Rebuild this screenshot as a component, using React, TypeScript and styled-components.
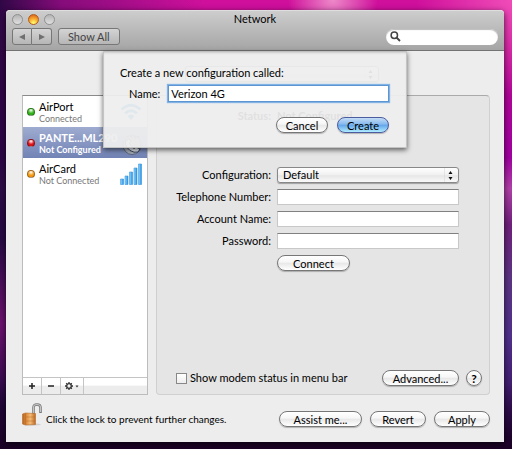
import React from "react";
import styled, { createGlobalStyle, css } from "styled-components";

const Global = createGlobalStyle`
  *, *::before, *::after { box-sizing: border-box; }
  body {
    margin: 0;
    font-family: Lato, "Open Sans", sans-serif;
    font-size: 11px;
    line-height: 14px;
    color: #000;
  }
  button, input, select { font: inherit; color: inherit; margin: 0; }
`;

const Desktop = styled.div`
  display: flex;
  min-height: 100vh;
  padding: 10px 8px 7px 6px;
  background:
    radial-gradient(circle at 65% 0, rgba(240, 150, 205, 0.9), transparent 8%),
    radial-gradient(circle at 100% 0, #f04cb8, transparent 14%),
    linear-gradient(180deg, transparent 85%, #1b0226 100%),
    radial-gradient(circle at 0 72%, rgba(140, 20, 130, 0.7), transparent 14%),
    linear-gradient(90deg, rgba(30, 6, 60, 0.9) 0, rgba(60, 8, 90, 0.5) 12%, transparent 40%),
    linear-gradient(180deg, #d0109c 0, #bb0894 12%, #a000a0 35%, #b040a8 42%, #70207c 50%, #5c3484 62%, #50308c 75%, #300650 100%);
`;

const Window = styled.main`
  position: relative;
  flex: 1;
  display: flex;
  flex-direction: column;
  min-width: 0;
  border-radius: 4px 4px 0 0;
  background: #ededed;
  box-shadow: 0 2px 6px rgba(0, 0, 0, 0.7);
`;

const Header = styled.header`
  display: flex;
  flex-direction: column;
  gap: 2px;
  height: 41px;
  padding-top: 1px;
  border-top: 1px solid #dedede;
  border-bottom: 1px solid #737373;
  border-radius: 4px 4px 0 0;
  background: linear-gradient(#cdcdcd, #a5a5a5);
`;

const TitleRow = styled.div`
  display: grid;
  grid-template-columns: 1fr auto 1fr;
  align-items: center;
  height: 14px;
  padding: 0 6px;
`;

const Title = styled.h1`
  margin: 0;
  font-size: 11px;
  font-weight: 400;
`;

const Lights = styled.div`
  display: flex;
  gap: 5px;
`;

const Light = styled.button<{ $lit?: boolean }>`
  width: 11px;
  height: 11px;
  padding: 0;
  border: 1px solid ${(p) => (p.$lit ? "#b35a1c" : "#8f8f8f")};
  border-radius: 50%;
  background: ${(p) =>
    p.$lit
      ? "radial-gradient(circle at 50% 90%, #fff36a 10%, #f8a72c 50%, #d9661c 90%)"
      : "linear-gradient(#b4b4b4, #e0e0e0)"};
`;

const Toolbar = styled.div`
  display: flex;
  align-items: center;
  gap: 6px;
  padding: 0 6px;
`;

const Segments = styled.div`
  display: flex;
`;

const ToolButton = styled.button`
  display: flex;
  align-items: center;
  justify-content: center;
  min-width: 60px;
  height: 17px;
  padding: 0 9px;
  border: 1px solid #777;
  border-radius: 3px;
  background: linear-gradient(#d4d4d4, #b6b6b6);
  color: #444;

  ${Segments} & {
    min-width: 20px;
    width: 20px;
    padding: 0;
  }
  ${Segments} &:first-child {
    border-radius: 3px 0 0 3px;
  }
  ${Segments} &:last-child {
    border-left: 0;
    border-radius: 0 3px 3px 0;
  }
`;

const Search = styled.label`
  display: flex;
  align-items: center;
  width: 112px;
  height: 16px;
  margin-left: auto;
  padding: 0 4px;
  border-radius: 8px;
  background: #fff;
  box-shadow: inset 0 1px 1px #bbb;

  input {
    flex: 1;
    min-width: 0;
    border: 0;
    outline: 0;
    background: transparent;
  }
`;

const Content = styled.div`
  position: relative;
  flex: 1;
  display: flex;
  flex-direction: column;
  padding: 15px 14px 13px 16px;
`;

const LocationRow = styled.div`
  display: flex;
  justify-content: center;
  height: 29px;
  padding-left: 52px;
`;

const Columns = styled.div`
  flex: 1;
  display: flex;
  gap: 8px;
`;

const Sidebar = styled.section`
  display: flex;
  flex-direction: column;
  width: 126px;
  border: 1px solid #bcbcbc;
  border-top-color: #8a8a8a;
  background: #fff;
`;

const Services = styled.ul`
  flex: 1;
  margin: 0;
  padding: 0;
  list-style: none;
`;

const Service = styled.li<{ $selected?: boolean }>`
  display: flex;
  align-items: center;
  gap: 4px;
  height: 31px;
  padding: 0 5px 0 4px;
  line-height: 13px;
  white-space: nowrap;
  ${(p) =>
    p.$selected &&
    css`
      background: linear-gradient(#9fabd0, #7183b5);
      color: #fff;
      font-weight: 700;
    `}
`;

const Dot = styled.span<{ $color: string }>`
  flex: none;
  width: 8px;
  height: 8px;
  border: 1px solid rgba(0, 0, 0, 0.35);
  border-radius: 50%;
  background: radial-gradient(circle at 50% 20%, #fff, ${(p) => p.$color} 55%);
`;

const ServiceText = styled.div`
  flex: 1;
  min-width: 0;
`;

const ServiceState = styled.div<{ $light?: boolean }>`
  font-size: 9px;
  line-height: 11px;
  color: ${(p) => (p.$light ? "#fff" : "#777")};
`;

const SidebarBar = styled.div`
  display: flex;
  height: 17px;
  border-top: 1px solid #c4c4c4;
  background: linear-gradient(#fff 45%, #ececec 50%);
`;

const BarButton = styled.button`
  display: flex;
  align-items: center;
  justify-content: center;
  width: 19px;
  padding: 0;
  border: 0;
  border-right: 1px solid #c4c4c4;
  background: transparent;

  &:last-child {
    width: 23px;
  }
`;

const Panel = styled.section`
  flex: 1;
  display: flex;
  flex-direction: column;
  min-width: 0;
  padding: 13px 7px 8px 19px;
  border: 1px solid #d0d0d0;
  border-top-color: #aaa;
  border-radius: 4px;
  background: #e5e5e5;
`;

const Form = styled.form`
  display: grid;
  grid-template-columns: 1fr 182px;
  grid-auto-rows: 16px;
  align-items: center;
  gap: 6px;
  padding-right: 23px;

  label {
    text-align: right;
    white-space: nowrap;
  }
`;

const Status = styled.div`
  display: grid;
  grid-template-columns: 1fr 182px;
  gap: 6px;
  height: 58px;
  padding-right: 23px;
  font-weight: 700;

  span:first-child {
    text-align: right;
  }
`;

const SelectBox = styled.div<{ $width?: string }>`
  display: grid;
  align-items: center;
  width: ${(p) => p.$width ?? "100%"};
  height: 16px;
  border: 1px solid #888;
  border-radius: 3px;
  background: linear-gradient(#fff, #f0f0f0 50%, #e6e6e6 55%, #fafafa);
  box-shadow: 0 1px 1px rgba(0, 0, 0, 0.3);

  > * {
    grid-area: 1 / 1;
  }
  svg {
    justify-self: end;
    pointer-events: none;
  }
  select {
    width: 100%;
    height: 14px;
    padding: 0 5px;
    border: 0;
    outline: 0;
    appearance: none;
    background: transparent;
    line-height: 14px;
  }
`;

const TextInput = styled.input`
  width: 100%;
  height: 16px;
  padding: 0 3px;
  border: 1px solid #c8c8c8;
  border-top-color: #808080;
  outline: 0;
  background: #fff;
`;

const PushButton = styled.button<{ $width: number; $primary?: boolean }>`
  width: ${(p) => p.$width}px;
  height: 16px;
  padding: 0;
  border: 1px solid ${(p) => (p.$primary ? "#4c5ca0" : "#777")};
  border-radius: 8px;
  background: ${(p) =>
    p.$primary
      ? "linear-gradient(#c4dcf6, #86b9ee 45%, #62a4ea 50%, #b0ecff)"
      : "linear-gradient(#fff, #f6f6f6 45%, #e7e7e7 50%, #fff)"};
  box-shadow: 0 1px 1px rgba(0, 0, 0, 0.25);
  line-height: 13px;
`;

const HelpButton = styled(PushButton)`
  font-size: 12px;
  font-weight: 700;
`;

const PanelFooter = styled.div`
  display: flex;
  align-items: center;
  gap: 7px;
  margin-top: auto;
`;

const CheckLabel = styled.label`
  display: flex;
  align-items: center;
  gap: 3px;
  margin-right: auto;

  input {
    width: 11px;
    height: 11px;
    appearance: none;
    border: 1px solid #888;
    background: linear-gradient(#fff, #eee);
  }
`;

const Footer = styled.footer`
  display: flex;
  align-items: center;
  gap: 8px;
  height: 34px;
  padding-top: 14px;
`;

const LockButton = styled.button`
  display: flex;
  align-items: center;
  gap: 4px;
  margin-right: auto;
  padding: 0;
  border: 0;
  background: transparent;
  font-size: 10px;

  svg {
    margin-top: -10px;
  }
`;

const Sheet = styled.section`
  position: absolute;
  top: 0;
  left: 50%;
  width: 304px;
  padding: 15px 17px 14px 16px;
  transform: translateX(-50%);
  border: 1px solid #c4c4c4;
  border-top: 0;
  background: rgba(238, 238, 238, 0.94);
  box-shadow: 0 2px 5px rgba(0, 0, 0, 0.6), inset 0 3px 3px -2px rgba(0, 0, 0, 0.3);
`;

const SheetTitle = styled.h2`
  margin: 0 0 5px;
  font-size: 11px;
  font-weight: 400;
  line-height: 14px;
`;

const NameRow = styled.label`
  display: flex;
  align-items: center;
  gap: 8px;
  padding-left: 9px;

  input {
    flex: 1;
    min-width: 0;
    height: 17px;
    padding: 0 2px;
    border: 1px solid #5b96d2;
    outline: 0;
    box-shadow: 0 0 0 1px #83b3e5, 0 0 1px 1px #83b3e5;
  }
`;

const SheetActions = styled.div`
  display: flex;
  justify-content: flex-end;
  gap: 9px;
  margin-top: 15px;
`;

const Steppers = () => (
  <svg width="14" height="14" viewBox="0 0 14 14" aria-hidden="true">
    <path d="M0 0v14" stroke="#d4d4d4" />
    <path d="M4.500 6 6.500 3 8.500 6ZM4.500 9 6.500 12 8.500 9Z" fill="#111" />
  </svg>
);

const Arrow = ({ flip }: { flip?: boolean }) => (
  <svg width="8" height="8" viewBox="0 0 8 8" aria-hidden="true">
    <path d={flip ? "M1 1 7 4 1 7Z" : "M7 1 1 4 7 7Z"} fill="#707070" />
  </svg>
);

const Magnifier = () => (
  <svg width="11" height="11" viewBox="0 0 11 11" aria-hidden="true">
    <circle cx="4.300" cy="4.300" r="3.200" fill="none" stroke="#444" strokeWidth="1.500" />
    <path d="m6.500 6.500 3.500 3.500" stroke="#444" strokeWidth="1.800" />
  </svg>
);

const Wifi = () => (
  <svg width="22" height="18" viewBox="0 0 22 18" aria-hidden="true">
    <g fill="none" stroke="#1c8cd8" strokeWidth="3">
      <path d="M1.500 6.500Q11-2 20.500 6.500" />
      <path d="M5 10.500Q11 5 17 10.500" />
    </g>
    <path d="M7.500 13Q11 10 14.500 13L11 17Z" fill="#1c8cd8" />
  </svg>
);

const Phone = () => (
  <svg width="22" height="24" viewBox="0 0 22 24" aria-hidden="true">
    <ellipse cx="12" cy="14" rx="9" ry="9.500" fill="#a6adb9" stroke="#57637c" />
    <path d="M5 11q1 6 5 8.500t8 1.500l2-3-4-2-2 1.500q-3-2-4.500-5l1.500-2-2-3Z" fill="#e6eaf2" stroke="#36425c" />
    <path d="M15 5v3m-4-3 1 2m7-2-2 2" stroke="#263655" />
  </svg>
);

const Bars = () => (
  <svg width="22" height="22" viewBox="0 0 22 22" aria-hidden="true">
    <defs>
      <linearGradient id="bars" x1="0" y1="0" x2="1" y2="0">
        <stop offset="0" stopColor="#9bdcfb" />
        <stop offset="1" stopColor="#1b8de6" />
      </linearGradient>
    </defs>
    <g fill="url(#bars)" stroke="#3c94da" strokeWidth="0.600">
      <path d="M.5 16h3v5.500h-3Z" />
      <path d="M5 13h3v8.500H5Z" />
      <path d="M9.500 9h3v12.500h-3Z" />
      <path d="M14 5h3v16.500h-3Z" />
      <path d="M18.500 1h3v20.500h-3Z" />
    </g>
  </svg>
);

const Gear = () => (
  <svg width="16" height="10" viewBox="0 0 16 10" aria-hidden="true">
    <circle cx="5" cy="5" r="2.300" fill="none" stroke="#333" strokeWidth="1.300" />
    <path
      d="M5 1v1.500M5 7.500V9M1 5h1.500M7.500 5H9M2.200 2.200l1 1M6.800 6.800l1 1M7.800 2.200l-1 1M3.200 6.800l-1 1"
      stroke="#333"
      strokeWidth="1.300"
    />
    <path d="M11.500 4.500h3l-1.500 2Z" fill="#333" />
  </svg>
);

const Sign = ({ plus }: { plus?: boolean }) => (
  <svg width="8" height="8" viewBox="0 0 8 8" aria-hidden="true">
    <path d={plus ? "M1 4h6M4 1v6" : "M1 4h6"} stroke="#222" strokeWidth="1.500" />
  </svg>
);

const Padlock = () => (
  <svg width="20" height="23" viewBox="0 0 20 23" aria-hidden="true">
    <defs>
      <linearGradient id="brass">
        <stop offset="0" stopColor="#b56422" />
        <stop offset="0.250" stopColor="#d98435" />
        <stop offset="0.600" stopColor="#f4bb76" />
        <stop offset="1" stopColor="#bd6822" />
      </linearGradient>
    </defs>
    <ellipse cx="10" cy="21.500" rx="9" ry="1.200" fill="#d0d0d0" />
    <path d="M11.500 11V4.500Q11.500 1.500 15 1.500T18.500 4.500V10" fill="none" stroke="#777" strokeWidth="2.600" />
    <path d="M11.500 10V4.500Q11.500 1.500 15 1.500T18.500 4.500V9" fill="none" stroke="#c4c4c4" strokeWidth="1.200" />
    <path d="m.5 11 3-1 10 .5v11l-10 .5-3-1Z" fill="url(#brass)" stroke="#b56c2c" strokeWidth="0.600" />
    <path d="M3.500 10.500v11M4 14h9M4 18h9" stroke="#a8601f" strokeWidth="0.400" />
  </svg>
);

const services = [
  { name: "AirPort", state: "Connected", color: "#35b51c", icon: <Wifi /> },
  { name: "PANTE...ML290", state: "Not Configured", color: "#dc141c", icon: <Phone />, selected: true },
  { name: "AirCard", state: "Not Connected", color: "#f59a13", icon: <Bars /> },
];

export default function App() {
  return (
    <>
      <Global />
      <Desktop>
        <Window>
          <Header>
            <TitleRow>
              <Lights>
                <Light aria-label="Close" />
                <Light aria-label="Minimize" $lit />
                <Light aria-label="Zoom" />
              </Lights>
              <Title>Network</Title>
            </TitleRow>
            <Toolbar>
              <Segments>
                <ToolButton aria-label="Back"><Arrow /></ToolButton>
                <ToolButton aria-label="Forward"><Arrow flip /></ToolButton>
              </Segments>
              <ToolButton>Show All</ToolButton>
              <Search>
                <Magnifier />
                <input type="search" aria-label="Search" />
              </Search>
            </Toolbar>
          </Header>

          <Content>
            <LocationRow>
              <SelectBox $width="194px">
                <select aria-label="Location"><option /></select>
                <Steppers />
              </SelectBox>
            </LocationRow>
            <Columns>
              <Sidebar>
                <Services>
                  {services.map((s) => (
                    <Service key={s.name} $selected={s.selected}>
                      <Dot $color={s.color} />
                      <ServiceText>
                        {s.name}
                        <ServiceState $light={s.selected}>{s.state}</ServiceState>
                      </ServiceText>
                      {s.icon}
                    </Service>
                  ))}
                </Services>
                <SidebarBar>
                  <BarButton aria-label="Add"><Sign plus /></BarButton>
                  <BarButton aria-label="Remove"><Sign /></BarButton>
                  <BarButton aria-label="Actions"><Gear /></BarButton>
                </SidebarBar>
              </Sidebar>

              <Panel>
                <Status>
                  <span>Status:</span>
                  <span>Not Configured</span>
                </Status>
                <Form onSubmit={(e) => e.preventDefault()}>
                  <label htmlFor="configuration">Configuration:</label>
                  <SelectBox>
                    <select id="configuration"><option>Default</option></select>
                    <Steppers />
                  </SelectBox>
                  <label htmlFor="telephone">Telephone Number:</label>
                  <TextInput id="telephone" type="tel" />
                  <label htmlFor="account">Account Name:</label>
                  <TextInput id="account" />
                  <label htmlFor="password">Password:</label>
                  <TextInput id="password" type="password" />
                  <span />
                  <PushButton $width={73}>Connect</PushButton>
                </Form>
                <PanelFooter>
                  <CheckLabel>
                    <input type="checkbox" />
                    Show modem status in menu bar
                  </CheckLabel>
                  <PushButton $width={77}>Advanced...</PushButton>
                  <HelpButton $width={16} aria-label="Help">?</HelpButton>
                </PanelFooter>
              </Panel>
            </Columns>
            <Footer>
              <LockButton>
                <Padlock />
                Click the lock to prevent further changes.
              </LockButton>
              <PushButton $width={83}>Assist me...</PushButton>
              <PushButton $width={56}>Revert</PushButton>
              <PushButton $width={56}>Apply</PushButton>
            </Footer>
            <Sheet role="dialog" aria-labelledby="sheet-title">
              <SheetTitle id="sheet-title">Create a new configuration called:</SheetTitle>
              <NameRow>
                Name:
                <input defaultValue="Verizon 4G" autoFocus />
              </NameRow>
              <SheetActions>
                <PushButton $width={52}>Cancel</PushButton>
                <PushButton $width={52} $primary>Create</PushButton>
              </SheetActions>
            </Sheet>
          </Content>
        </Window>
      </Desktop>
    </>
  );
}
